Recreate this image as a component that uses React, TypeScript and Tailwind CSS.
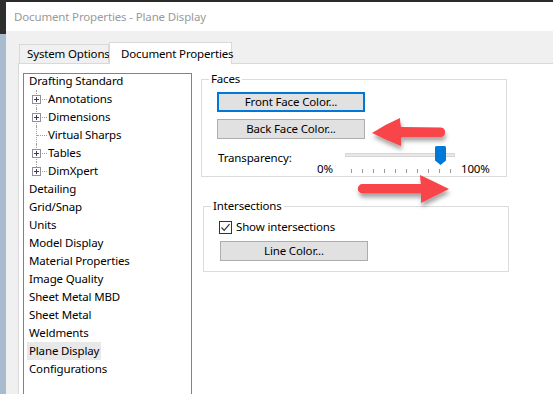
import React from "react";

const font = "font-['Noto_Sans','Liberation_Sans',sans-serif]";

type TreeItem = { label: string; child?: boolean; plus?: boolean; last?: boolean; selected?: boolean };

const treeItems: TreeItem[] = [
  { label: "Drafting Standard" },
  { label: "Annotations", child: true, plus: true },
  { label: "Dimensions", child: true, plus: true },
  { label: "Virtual Sharps", child: true },
  { label: "Tables", child: true, plus: true },
  { label: "DimXpert", child: true, plus: true, last: true },
  { label: "Detailing" },
  { label: "Grid/Snap" },
  { label: "Units" },
  { label: "Model Display" },
  { label: "Material Properties" },
  { label: "Image Quality" },
  { label: "Sheet Metal MBD" },
  { label: "Sheet Metal" },
  { label: "Weldments" },
  { label: "Plane Display", selected: true },
  { label: "Configurations" },
];

const PlusBox = () => (
  <svg width="9" height="9" viewBox="0 0 9 9" className="block">
    <rect x="0.5" y="0.5" width="8" height="8" fill="#fff" stroke="#919191" />
    <path d="M2 4.5h5M4.5 2v5" stroke="#2c3e6e" strokeWidth="1" />
  </svg>
);

const TreeRow = ({ item }: { item: TreeItem }) => (
  <div className="flex h-[18px] items-center">
    {item.child && (
      <div className="relative h-full w-[19px] shrink-0">
        <div
          className={`absolute left-[7px] top-0 border-l border-dotted border-[#a0a0a0] ${
            item.last ? "h-[9px]" : "h-full"
          }`}
        />
        <div className="absolute left-[8px] top-[9px] w-[10px] border-t border-dotted border-[#a0a0a0]" />
        {item.plus && (
          <div className="absolute left-[3px] top-[5px]">
            <PlusBox />
          </div>
        )}
      </div>
    )}
    <span
      className={`whitespace-nowrap leading-[18px] ${
        item.selected ? "-ml-[2px] bg-[#e8e8e8] px-[2px]" : ""
      }`}
    >
      {item.label}
    </span>
  </div>
);

const WinButton = ({ label, focused }: { label: string; focused?: boolean }) => (
  <button
    className={`flex h-[20px] w-[148px] items-center justify-center bg-[#e1e1e1] text-black ${
      focused ? "border-2 border-[#0078d7]" : "border border-[#adadad]"
    }`}
  >
    {label}
  </button>
);

const Arrows = () => (
  <svg
    width="553"
    height="394"
    viewBox="0 0 553 394"
    className="pointer-events-none absolute left-0 top-0"
  >
    <defs>
      <filter id="sh" x="-20%" y="-40%" width="140%" height="200%">
        <feDropShadow dx="1" dy="4" stdDeviation="2.2" floodColor="#000" floodOpacity="0.35" />
      </filter>
    </defs>
    <g fill="#f7444a" filter="url(#sh)">
      <path d="M372 133 Q386 124 400 118 Q400 122 401 127 L441 127.5 A4.8 4.8 0 0 1 441 137 L401 137 Q401 141 401 146 Q386 140 372 133 Z" />
      <path d="M449 189 Q435 196 421 203 Q421 198 421 193.5 L362.5 193.5 A4.7 4.7 0 0 1 362.5 184 L421 184 Q420 179 420 175 Q435 182 449 189 Z" />
    </g>
  </svg>
);

const App = () => {
  const ticks = Array.from({ length: 10 }, (_, i) => i);

  return (
    <div
      className={`relative flex h-[394px] w-[553px] overflow-hidden bg-white text-[11.5px] tracking-[-0.15px] text-black ${font}`}
    >
      <div className="flex w-[6px] shrink-0 flex-col">
        <div className="h-[34px] bg-[#2e2e2e]" />
        <div className="flex-1 bg-[#a9bccf]" />
      </div>

      <div className="flex min-w-0 flex-1 flex-col border-t-2 border-[#2b2b2b]">
        <div className="flex h-[29px] shrink-0 items-center bg-white pl-[8px] text-[#9a9a9a]">
          Document Properties - Plane Display
        </div>

        <div className="flex flex-1 flex-col bg-[#f0f0f0] pl-[12px] pt-[11px]">
          <div className="flex h-[21px] items-end pl-[1px]">
            <div className="flex h-[19px] w-[90px] items-center whitespace-nowrap border border-b-0 border-[#d9d9d9] bg-[#f0f0f0] pl-[7px]">
              System Options
            </div>
            <div className="relative -mb-px flex h-[22px] w-[123px] items-center whitespace-nowrap border border-b-0 border-[#d9d9d9] bg-white pl-[11px]">
              Document Properties
            </div>
          </div>

          <div className="flex flex-1 border-l border-t border-[#d9d9d9] bg-white pl-[4px] pt-[9px]">
            <div className="h-[340px] w-[169px] shrink-0 border border-[#828282] bg-white pl-[5px]">
              <div className="-mt-[2px]">
                {treeItems.map((item) => (
                  <TreeRow key={item.label} item={item} />
                ))}
              </div>
            </div>

            <div className="ml-[9px] -mt-[2px] flex flex-col">
              <fieldset className="w-[306px] border border-[#dcdcdc]">
                <legend className="ml-[7px] px-[2px] leading-[16px]">Faces</legend>
                <div className="pl-[15px]">
                  <div className="mt-[5px] flex flex-col gap-[7px]">
                    <WinButton label="Front Face Color..." focused />
                    <WinButton label="Back Face Color..." />
                  </div>
                  <div className="mt-[7px] flex h-[30px]">
                    <div className="w-[100px] pl-[1px] pt-[3px] leading-[18px]">Transparency:</div>
                    <div className="w-[26px] pt-[16px] leading-[14px]">0%</div>
                    <div className="relative w-[118px]">
                      <div className="ml-[2px] mt-[7px] h-[4px] w-[110px] border border-[#d6d6d6] bg-[#e7e7e7]" />
                      <div className="mt-[12px] flex gap-[10px] pl-[8px]">
                        {ticks.map((t) => (
                          <div key={t} className="h-[4px] w-px bg-[#9a9a9a]" />
                        ))}
                      </div>
                      <svg width="11" height="19" viewBox="0 0 11 19" className="absolute left-[92px] top-0">
                        <path d="M0 1.5Q0 0 1.5 0h8Q11 0 11 1.5V14.5L5.5 19L0 14.5Z" fill="#0078d7" />
                      </svg>
                    </div>
                    <div className="pt-[16px] leading-[14px]">100%</div>
                  </div>
                </div>
              </fieldset>

              <fieldset className="ml-[2px] mt-[21px] w-[306px] border border-[#dcdcdc] pb-[10px]">
                <legend className="ml-[7px] px-[2px] leading-[16px]">Intersections</legend>
                <div className="pl-[15px]">
                  <label className="mt-[6px] flex h-[14px] items-center gap-[4px]">
                    <span className="flex h-[13px] w-[13px] items-center justify-center border border-[#333] bg-white">
                      <svg width="11" height="11" viewBox="0 0 11 11">
                        <path d="M1.5 5.5L4.2 8.3L9.5 2.2" fill="none" stroke="#333" strokeWidth="1.2" />
                      </svg>
                    </span>
                    <span className="leading-[14px]">Show intersections</span>
                  </label>
                  <div className="ml-[1px] mt-[7px]">
                    <WinButton label="Line Color..." />
                  </div>
                </div>
              </fieldset>
            </div>
          </div>
        </div>
      </div>

      <Arrows />
    </div>
  );
};

export default App;
